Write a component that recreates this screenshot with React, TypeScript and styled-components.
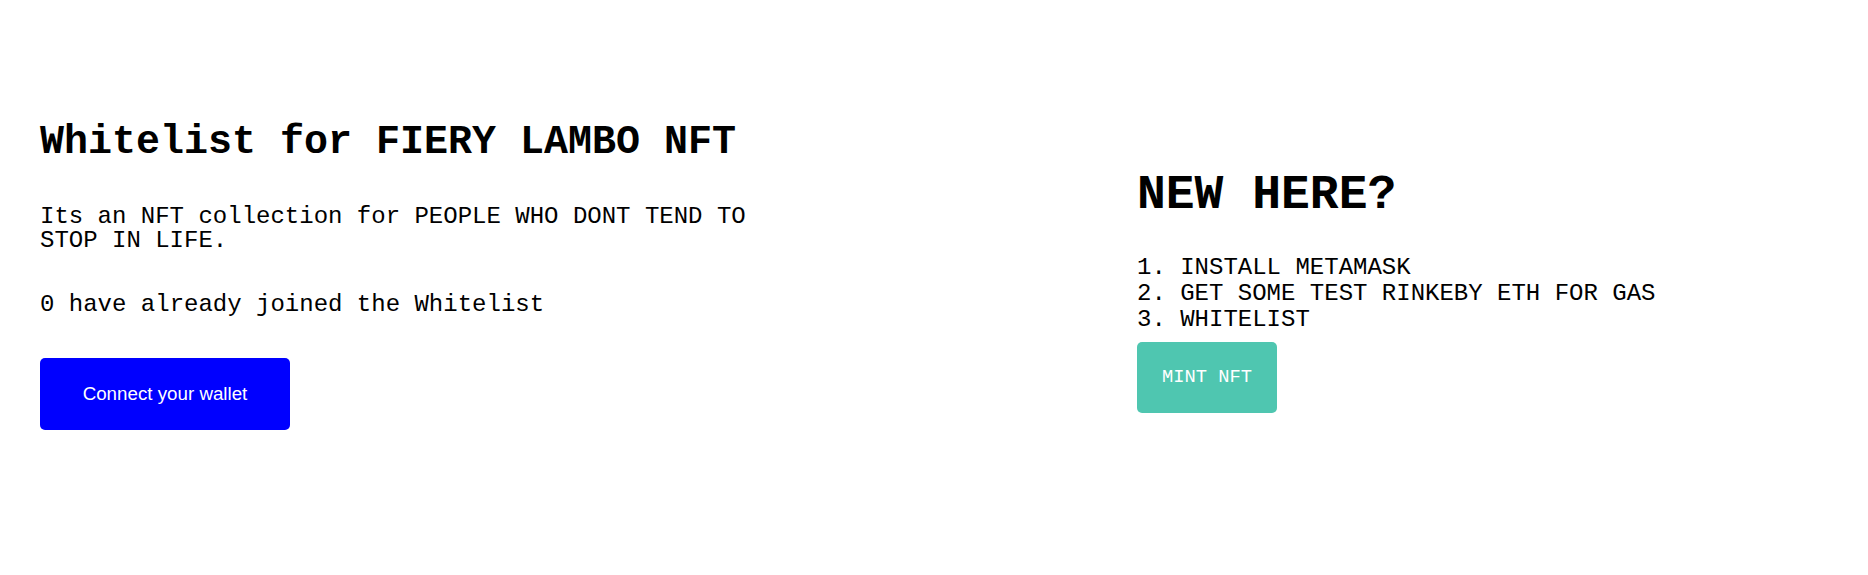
import React from "react";
import styled, { createGlobalStyle } from "styled-components";

const mono = `"Courier New", "Nimbus Mono PS", "Nimbus Mono L", FreeMono, "Liberation Mono", monospace`;

const GlobalStyle = createGlobalStyle`
  html, body {
    margin: 0;
    padding: 0;
    background: #ffffff;
  }
  body {
    font-family: ${mono};
    color: #000000;
  }
`;

const Main = styled.main`
  display: grid;
  grid-template-columns: 1097px auto;
  align-items: start;
  min-height: 575px;
  padding-left: 40px;
  box-sizing: border-box;
  font-family: ${mono};
`;

const Column = styled.section<{ $top: number }>`
  display: flex;
  flex-direction: column;
  align-items: flex-start;
  padding-top: ${(p) => p.$top}px;
`;

const Title = styled.h1`
  font-size: 40px;
  line-height: 45px;
  font-weight: 700;
  margin: 0 0 40px;
  white-space: nowrap;
`;

const Description = styled.div`
  font-size: 24px;
  line-height: 24px;
  width: 740px;
  margin: 0 0 40px;
`;

const ConnectButton = styled.button`
  width: 250px;
  margin-top: 1px;
  padding: 25px;
  border: none;
  border-radius: 5px;
  background-color: #0000ff;
  color: #ffffff;
  font-family: "Liberation Sans", Arial, sans-serif;
  font-size: 18.75px;
  line-height: 21.5px;
  cursor: pointer;
`;

const Heading = styled.h1`
  font-size: 48px;
  line-height: 54px;
  font-weight: 700;
  margin: 0 0 33px;
  white-space: nowrap;
`;

const Steps = styled.div`
  display: flex;
  flex-direction: column;
`;

const Step = styled.div`
  font-size: 24px;
  line-height: 26px;
  white-space: nowrap;
`;

const MintButton = styled.button`
  margin-top: 9px;
  padding: 25px;
  border: none;
  border-radius: 5px;
  background-color: #4fc6b0;
  color: #ffffff;
  font-family: ${mono};
  font-size: 18.75px;
  line-height: 21px;
  cursor: pointer;
`;

const steps = [
  "1. INSTALL METAMASK",
  "2. GET SOME TEST RINKEBY ETH FOR GAS",
  "3. WHITELIST",
];

export default function App() {
  const joined = 0;
  return (
    <>
      <GlobalStyle />
      <Main>
        <Column $top={120}>
          <Title>Whitelist for FIERY LAMBO NFT</Title>
          <Description>
            Its an NFT collection for PEOPLE WHO DONT TEND TO STOP IN LIFE.
          </Description>
          <Description>{joined} have already joined the Whitelist</Description>
          <ConnectButton>Connect your wallet</ConnectButton>
        </Column>
        <Column $top={168}>
          <Heading>NEW HERE?</Heading>
          <Steps>
            {steps.map((s) => (
              <Step key={s}>{s}</Step>
            ))}
          </Steps>
          <MintButton>MINT NFT</MintButton>
        </Column>
      </Main>
    </>
  );
}
